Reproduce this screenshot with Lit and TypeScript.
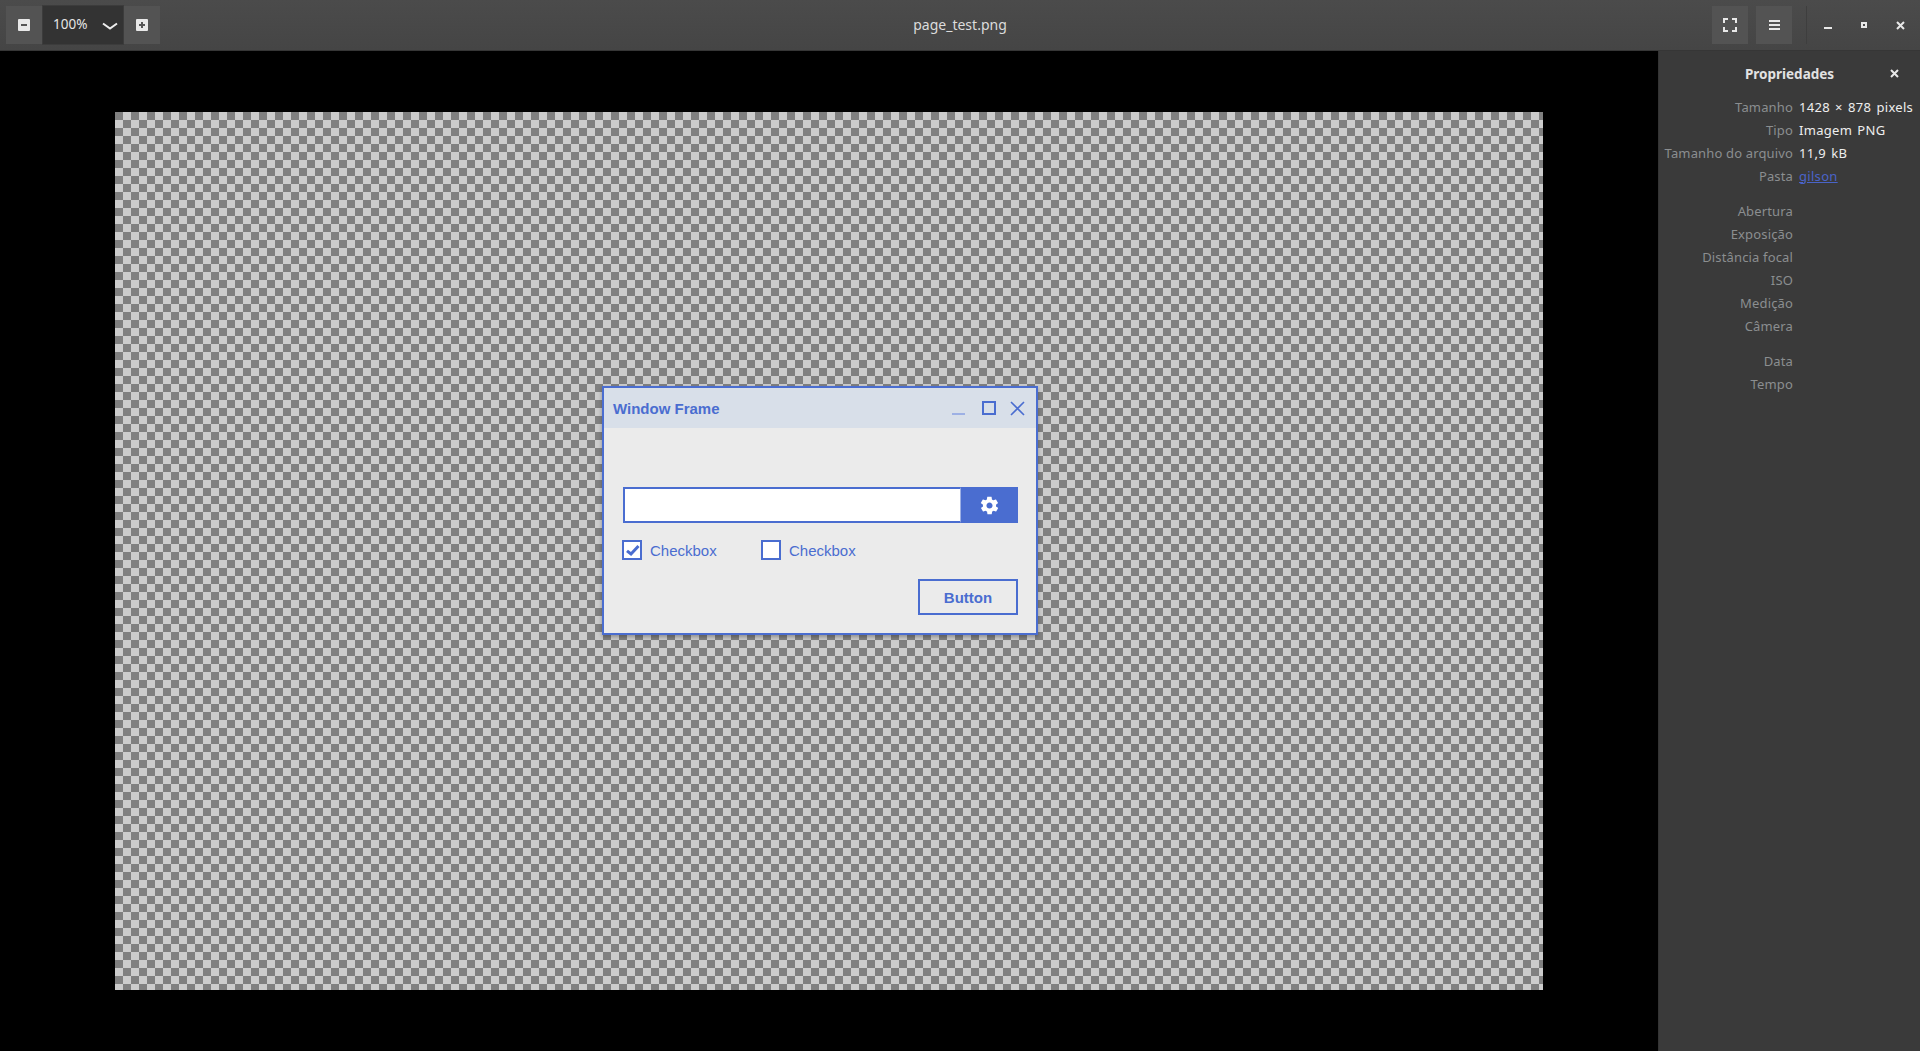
import { LitElement, html, css, svg } from 'lit';
import { customElement } from 'lit/decorators.js';

const PROPS_FILE = [
  ['Tamanho', '1428 × 878 pixels'],
  ['Tipo', 'Imagem PNG'],
  ['Tamanho do arquivo', '11,9 kB'],
];
const PROPS_CAMERA = ['Abertura', 'Exposição', 'Distância focal', 'ISO', 'Medição', 'Câmera'];
const PROPS_DATE = ['Data', 'Tempo'];

const icon = (w: number, h: number, body: unknown) =>
  html`<svg width=${w} height=${h} viewBox="0 0 ${w} ${h}">${body}</svg>`;

@customElement('mock-window')
export class MockWindow extends LitElement {
  static styles = css`
    :host {
      position: absolute;
      left: 487px;
      top: 274px;
      width: 436px;
      height: 249px;
      box-sizing: border-box;
      display: flex;
      flex-direction: column;
      border: 2px solid #4a6dd0;
      background: #ebebeb;
      box-shadow: 0 2px 4px rgba(0, 0, 0, 0.3);
      font-family: 'Liberation Sans', Arial, sans-serif;
      color: #4a6dd0;
    }
    .title {
      height: 40px;
      flex: none;
      background: #d8dfe9;
      display: flex;
      align-items: center;
      padding: 0 11px 0 9px;
      font-size: 15px;
      font-weight: 700;
    }
    .title span { flex: 1; }
    .title svg { display: block; }
    .title .min { margin-right: 16px; }
    .title .max { margin-right: 14px; }
    .body {
      flex: 1;
      display: flex;
      flex-direction: column;
      padding: 59px 18px 0 19px;
    }
    .field { display: flex; height: 36px; }
    .input {
      flex: 1;
      box-sizing: border-box;
      background: #fff;
      border: 2px solid #4a6dd0;
      border-right: 1px solid #9db0e4;
    }
    .gear {
      width: 57px;
      background: #4a6dd0;
      display: flex;
      align-items: center;
      justify-content: center;
    }
    .checks {
      display: flex;
      margin-top: 17px;
      margin-left: -1px;
      font-size: 15px;
      line-height: 20px;
    }
    .check { display: flex; align-items: center; gap: 8px; width: 139px; height: 20px; }
    .check span { margin-top: 1px; }
    .box {
      width: 20px;
      height: 20px;
      box-sizing: border-box;
      border: 2px solid #4a6dd0;
      background: #fff;
    }
    .box svg { display: block; }
    .actions { display: flex; justify-content: flex-end; margin-top: 19px; }
    .button {
      width: 100px;
      height: 36px;
      box-sizing: border-box;
      border: 2px solid #4a6dd0;
      display: flex;
      align-items: center;
      justify-content: center;
      font-size: 15px;
      font-weight: 700;
    }
  `;

  render() {
    return html`
      <div class="title">
        <span>Window Frame</span>
        <div class="min">${icon(14, 14, svg`<rect x="0" y="12" width="13" height="2" fill="#9db0e4"/>`)}</div>
        <div class="max">${icon(14, 14, svg`<rect x="1" y="1" width="12" height="12" fill="none" stroke="#4a6dd0" stroke-width="2"/>`)}</div>
        ${icon(15, 15, svg`<path d="M1 1l13 13M14 1L1 14" fill="none" stroke="#4a6dd0" stroke-width="1.6"/>`)}
      </div>
      <div class="body">
        <div class="field">
          <div class="input"></div>
          <div class="gear">
            <svg width="21" height="21" viewBox="0 0 24 24">
              <path fill="#fff" d="M19.4 13c.1-.3.1-.7.1-1s0-.7-.1-1l2.1-1.6c.2-.2.2-.4.1-.6l-2-3.5c-.1-.2-.4-.3-.6-.2l-2.5 1c-.5-.4-1.100-.7-1.700-1l-.4-2.700c0-.2-.2-.4-.5-.4h-4c-.3 0-.5.2-.5.4l-.4 2.700c-.6.300-1.200.6-1.700 1l-2.500-1c-.2-.1-.5 0-.6.2l-2 3.500c-.1.200-.1.400.1.600L4.600 11c-.1.300-.1.700-.1 1s0 .7.1 1l-2.100 1.600c-.2.200-.2.400-.1.600l2 3.500c.1.200.4.300.6.200l2.500-1c.5.400 1.100.7 1.700 1l.4 2.700c0 .2.200.4.500.4h4c.3 0 .5-.2.5-.4l.4-2.700c.6-.3 1.200-.6 1.700-1l2.500 1c.2.100.5 0 .6-.2l2-3.500c.1-.2.100-.4-.1-.6L19.400 13zM12 15.500c-1.900 0-3.500-1.600-3.500-3.500s1.600-3.500 3.500-3.500 3.500 1.600 3.500 3.500-1.600 3.500-3.500 3.500z"/>
            </svg>
          </div>
        </div>
        <div class="checks">
          <div class="check">
            <div class="box">
              ${icon(16, 16, svg`<path d="M3 8.800l4 3.200 7.500-8" fill="none" stroke="#4a6dd0" stroke-width="3"/>`)}
            </div>
            <span>Checkbox</span>
          </div>
          <div class="check"><div class="box"></div><span>Checkbox</span></div>
        </div>
        <div class="actions"><div class="button">Button</div></div>
      </div>
    `;
  }
}

@customElement('app-root')
export class AppRoot extends LitElement {
  static styles = css`
    :host {
      display: flex;
      flex-direction: column;
      width: 1920px;
      height: 1051px;
      overflow: hidden;
      background: #000;
      font-family: 'Noto Sans', sans-serif;
      font-size: 13px;
    }
    header {
      height: 50px;
      flex: none;
      display: flex;
      align-items: center;
      position: relative;
      padding: 0 6px;
      background: linear-gradient(#4b4b4b, #454545);
      border-bottom: 1px solid #363636;
      color: #eee;
    }
    .btn {
      box-sizing: border-box;
      height: 38px;
      display: flex;
      align-items: center;
      justify-content: center;
      background: #535353;
    }
    .btn svg { display: block; }
    .zoom-step { width: 36px; }
    .zoom-value {
      width: 82px;
      height: 40px;
      box-sizing: border-box;
      display: flex;
      align-items: center;
      justify-content: space-between;
      padding: 0 5px 2px 10px;
      background: #333;
      border: 1px solid #3c3c3c;
      color: #e6e6e6;
      font-size: 13.5px;
    }
    .zoom-value svg { display: block; margin-top: 4px; }
    .name {
      position: absolute;
      left: 0;
      right: 0;
      padding-bottom: 2px;
      text-align: center;
      font-size: 14px;
      color: #dcdcdc;
    }
    .end { margin-left: auto; display: flex; align-items: center; margin-right: -4px; }
    .tool { width: 36px; margin-right: 8px; }
    .sep { width: 1px; height: 38px; background: #3e3e3e; margin: 0 3px 0 6px; }
    .wm { width: 36px; height: 38px; display: flex; align-items: center; justify-content: center; }
    .wm svg { display: block; }
    main { flex: 1; display: flex; min-height: 0; }
    .viewer { flex: 1; padding: 61px 0 0 115px; }
    .image {
      position: relative;
      width: 1428px;
      height: 878px;
      background-color: #ccc;
      background-image: conic-gradient(#ccc 25%, #808080 0 50%, #ccc 0 75%, #808080 0);
      background-size: 16px 16px;
    }
    aside {
      width: 262px;
      flex: none;
      box-sizing: border-box;
      background: #3a3a3a;
      border-left: 1px solid #333;
      color: #eee;
      display: flex;
      flex-direction: column;
    }
    .side-head {
      height: 44px;
      display: flex;
      align-items: center;
      position: relative;
      justify-content: center;
      font-weight: 700;
      padding-top: 1px;
      box-sizing: border-box;
      font-size: 13.5px;
      color: #e2e2e2;
    }
    .side-head svg { position: absolute; right: 21px; top: 18px; }
    .grid {
      display: grid;
      grid-template-columns: 134px 1fr;
      column-gap: 6px;
      grid-auto-rows: 23px;
      align-items: center;
      white-space: nowrap;
    }
    .grid + .grid { margin-top: 12px; }
    .k { text-align: right; color: #8b8e90; letter-spacing: 0.15px; }
    .v { letter-spacing: 0.3px; word-spacing: 1.5px; }
    a { color: #4a64c9; text-decoration: underline; }
  `;

  render() {
    return html`
      <header>
        <div class="btn zoom-step">
          ${icon(12, 12, svg`<rect width="12" height="12" rx="1" fill="#e8e8e8"/><rect x="3" y="5" width="6" height="2" fill="#555"/>`)}
        </div>
        <div class="zoom-value">
          <span>100%</span>
          ${icon(16, 8, svg`<path d="M1 1.500l7 5 7-5" fill="none" stroke="#eee" stroke-width="2"/>`)}
        </div>
        <div class="btn zoom-step">
          ${icon(12, 12, svg`<rect width="12" height="12" rx="1" fill="#e8e8e8"/><path d="M3 5h2V3h2v2h2v2H7v2H5V7H3z" fill="#555"/>`)}
        </div>
        <div class="name">page_test.png</div>
        <div class="end">
          <div class="btn tool">
            ${icon(14, 14, svg`<path d="M1 5V1h4M9 1h4v4M13 9v4H9M5 13H1V9" fill="none" stroke="#e8e8e8" stroke-width="2"/>`)}
          </div>
          <div class="btn tool">
            ${icon(11, 10, svg`<path d="M0 1h11M0 5h11M0 9h11" stroke="#e8e8e8" stroke-width="2"/>`)}
          </div>
          <div class="sep"></div>
          <div class="wm">${icon(8, 8, svg`<rect y="6" width="8" height="2" fill="#e8e8e8"/>`)}</div>
          <div class="wm">${icon(6, 6, svg`<rect x="1" y="1" width="4" height="4" fill="none" stroke="#e8e8e8" stroke-width="2"/>`)}</div>
          <div class="wm">${icon(9, 9, svg`<path d="M1 1l7 7M8 1L1 8" stroke="#e8e8e8" stroke-width="2"/>`)}</div>
        </div>
      </header>
      <main>
        <div class="viewer">
          <div class="image"><mock-window></mock-window></div>
        </div>
        <aside>
          <div class="side-head">
            Propriedades
            ${icon(9, 9, svg`<path d="M1 1l7 7M8 1L1 8" stroke="#e8e8e8" stroke-width="2"/>`)}
          </div>
          <div class="grid">
            ${PROPS_FILE.map(([k, v]) => html`<div class="k">${k}</div><div class="v">${v}</div>`)}
            <div class="k">Pasta</div><div class="v"><a>gilson</a></div>
          </div>
          <div class="grid">${PROPS_CAMERA.map((k) => html`<div class="k">${k}</div><div></div>`)}</div>
          <div class="grid">${PROPS_DATE.map((k) => html`<div class="k">${k}</div><div></div>`)}</div>
        </aside>
      </main>
    `;
  }
}
